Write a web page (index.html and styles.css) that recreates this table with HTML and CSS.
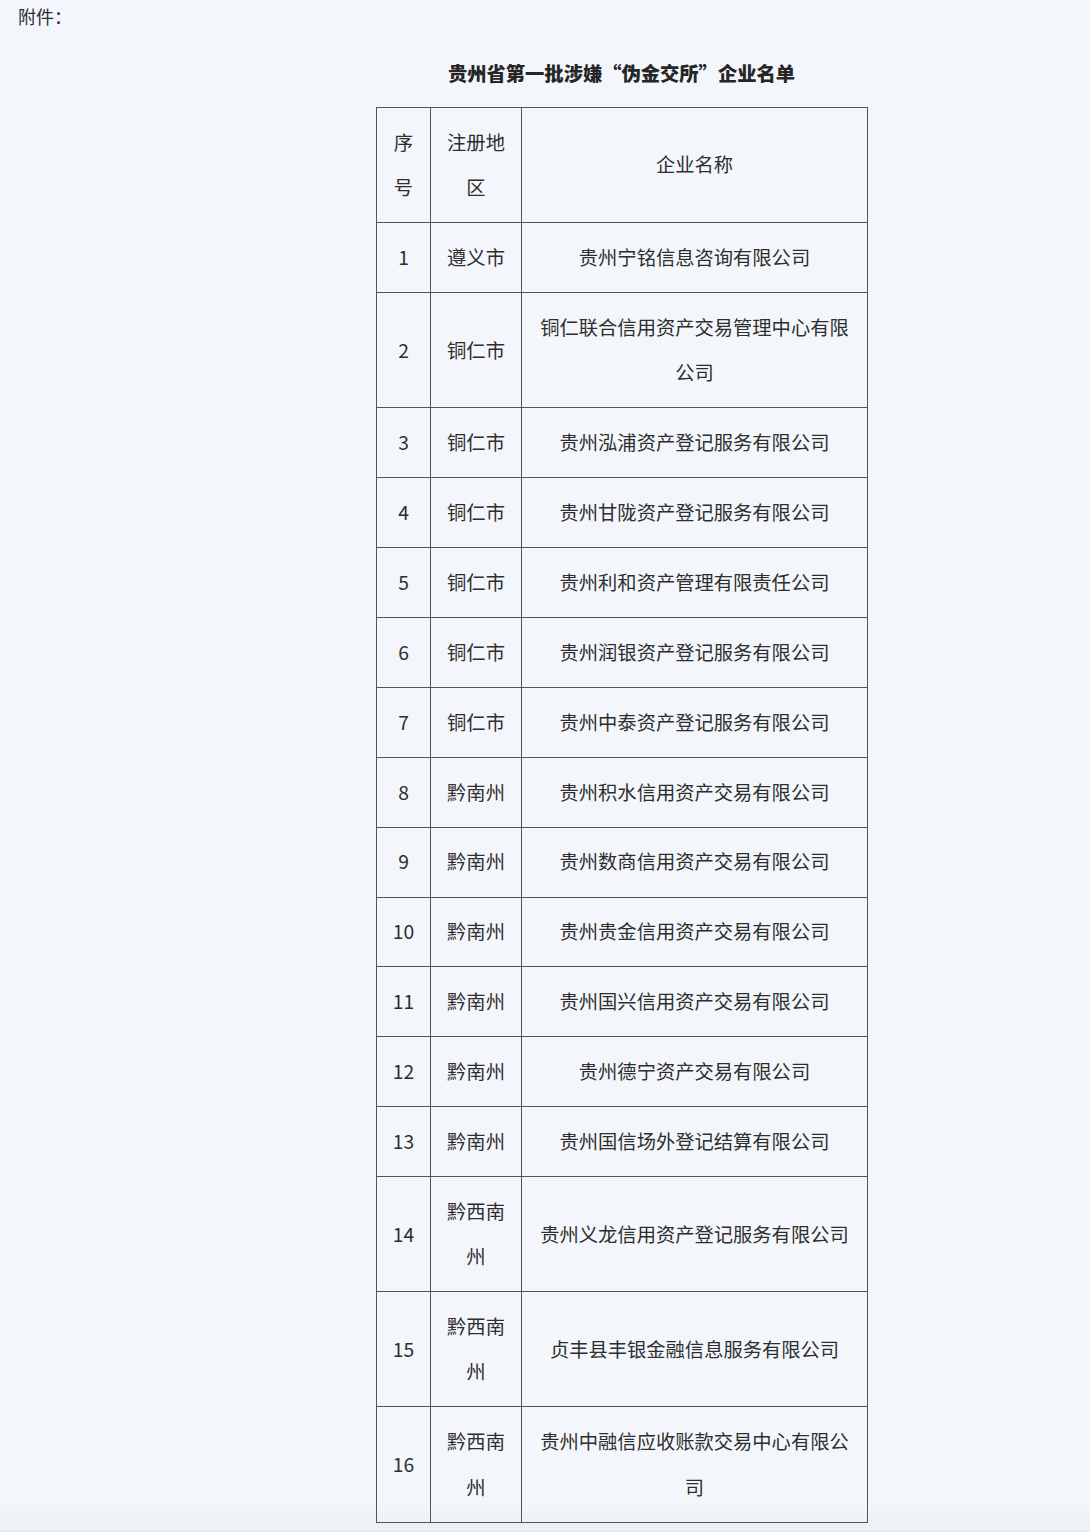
FILE: index.html
```html
<!DOCTYPE html>
<html lang="zh-CN">
<head>
<meta charset="utf-8">
<title>附件</title>
<link rel="stylesheet" href="styles.css">
</head>
<body>
<p class="attach">附件：</p>
<div class="doc">
  <h1 class="title">贵州省第一批涉嫌“伪金交所”企业名单</h1>
  <table class="list">
    <colgroup><col class="c1"><col class="c2"><col class="c3"></colgroup>
    <tr><td>序号</td><td>注册地区</td><td>企业名称</td></tr>
    <tr><td>1</td><td>遵义市</td><td>贵州宁铭信息咨询有限公司</td></tr>
    <tr><td>2</td><td>铜仁市</td><td>铜仁联合信用资产交易管理中心有限公司</td></tr>
    <tr><td>3</td><td>铜仁市</td><td>贵州泓浦资产登记服务有限公司</td></tr>
    <tr><td>4</td><td>铜仁市</td><td>贵州甘陇资产登记服务有限公司</td></tr>
    <tr><td>5</td><td>铜仁市</td><td>贵州利和资产管理有限责任公司</td></tr>
    <tr><td>6</td><td>铜仁市</td><td>贵州润银资产登记服务有限公司</td></tr>
    <tr><td>7</td><td>铜仁市</td><td>贵州中泰资产登记服务有限公司</td></tr>
    <tr><td>8</td><td>黔南州</td><td>贵州积水信用资产交易有限公司</td></tr>
    <tr><td>9</td><td>黔南州</td><td>贵州数商信用资产交易有限公司</td></tr>
    <tr><td>10</td><td>黔南州</td><td>贵州贵金信用资产交易有限公司</td></tr>
    <tr><td>11</td><td>黔南州</td><td>贵州国兴信用资产交易有限公司</td></tr>
    <tr><td>12</td><td>黔南州</td><td>贵州德宁资产交易有限公司</td></tr>
    <tr><td>13</td><td>黔南州</td><td>贵州国信场外登记结算有限公司</td></tr>
    <tr><td>14</td><td>黔西南州</td><td>贵州义龙信用资产登记服务有限公司</td></tr>
    <tr><td>15</td><td>黔西南州</td><td>贞丰县丰银金融信息服务有限公司</td></tr>
    <tr><td>16</td><td>黔西南州</td><td>贵州中融信应收账款交易中心有限公司</td></tr>
  </table>
</div>
</body>
</html>
```
FILE: styles.css
```css
html {
  background: linear-gradient(to bottom, #f3f7fc 0, #f3f7fc 1505px, #eceff3 1530px, #e4e7eb 1531px);
  min-height: 100%;
}
body {
  margin: 0;
  padding: 0;
  font-family: "Noto Sans CJK SC", "Microsoft YaHei", sans-serif;
  color: #2e2e2e;
}
.attach {
  margin: 0;
  padding: 4px 0 0 18px;
  font-size: 18px;
  line-height: 24px;
}
.doc {
  margin-left: 376px;
  width: 491px;
}
.title {
  margin: 32px 0 0;
  text-align: center;
  font-size: 19.3px;
  line-height: 26px;
  font-weight: 900;
  color: #262626;
}
.list {
  margin-top: 21px;
  width: 491px;
  table-layout: fixed;
  border-collapse: collapse;
  font-size: 19.3px;
  line-height: 45.3px;
}
.c1 { width: 54px; }
.c2 { width: 91px; }
.c3 { width: 346px; }
.list td {
  border: 1px solid #555;
  padding: 11.8px 12px;
  text-align: center;
  vertical-align: middle;
  word-break: break-all;
}
```
